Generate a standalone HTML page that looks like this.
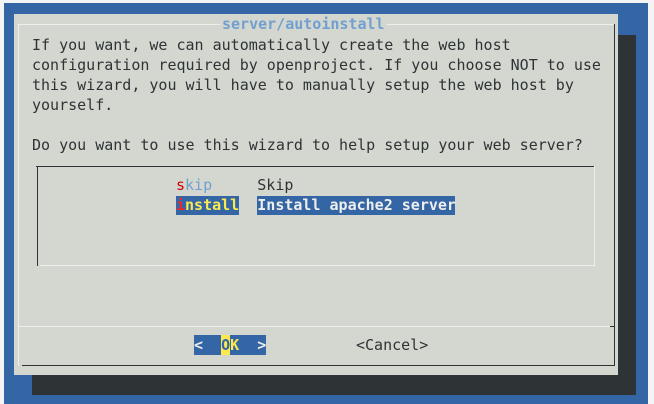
<!DOCTYPE html>
<html><head><meta charset="utf-8"><style>
body{margin:0;width:654px;height:404px;background:#f4f4f4;position:relative;overflow:hidden;font-family:"DejaVu Sans Mono","Liberation Mono",monospace;font-size:15px;line-height:20px;color:#2e3436}
div{position:absolute;white-space:pre}
.ln{background:#eeeeec}
.dk{background:#2e3436}
</style></head><body>
<div style="left:4px;top:3px;width:644px;height:401px;background:#3465a4"></div>
<div style="left:32px;top:35px;width:604px;height:360px;background:#2e3436"></div>
<div style="left:14px;top:14px;width:604px;height:361px;background:#d3d7cf"></div>
<!-- frame -->
<div class="ln" style="left:18px;top:24px;width:597px;height:1px"></div>
<div class="ln" style="left:18px;top:24px;width:1px;height:342px"></div>
<div class="dk" style="left:614px;top:24px;width:1px;height:342px"></div>
<div class="dk" style="left:22px;top:365px;width:593px;height:1px"></div>
<div style="left:220px;top:14px;background:#d3d7cf;color:#729fcf;font-weight:bold;padding:0 2px">server/autoinstall</div>
<div style="left:32px;top:35px">If you want, we can automatically create the web host
configuration required by openproject. If you choose NOT to use
this wizard, you will have to manually setup the web host by
yourself.

Do you want to use this wizard to help setup your web server?</div>
<!-- listbox -->
<div class="dk" style="left:36px;top:166px;width:559px;height:1px"></div>
<div class="dk" style="left:37px;top:166px;width:1px;height:100px"></div>
<div class="ln" style="left:40px;top:265px;width:555px;height:1px"></div>
<div class="ln" style="left:594px;top:166px;width:1px;height:100px"></div>
<div style="left:176px;top:175px"><span style="color:#cc0000">s</span><span style="color:#729fcf">kip</span>     Skip</div>
<div style="left:176px;top:196px;height:19px;width:63px;background:#3465a4"></div>
<div style="left:257px;top:196px;height:19px;width:198px;background:#3465a4"></div>
<div style="left:176px;top:195px;font-weight:bold"><span style="color:#ef2929">i</span><span style="color:#fce94f">nstall</span>  <span style="color:#eeeeec">Install apache2 server</span></div>
<!-- separator -->
<div class="ln" style="left:19px;top:326px;width:595px;height:1px"></div>
<div class="dk" style="left:610px;top:326px;width:5px;height:1px"></div>
<!-- buttons -->
<div style="left:194px;top:335px;width:72px;height:20px;background:#3465a4"></div>
<div style="left:221px;top:335px;width:9px;height:20px;background:#fce94f"></div>
<div style="left:194px;top:335px;font-weight:bold;color:#eeeeec">&lt;  <span style="color:#3465a4">O</span><span style="color:#fce94f">K</span>  &gt;</div>
<div style="left:356px;top:335px">&lt;Cancel&gt;</div>
</body></html>
